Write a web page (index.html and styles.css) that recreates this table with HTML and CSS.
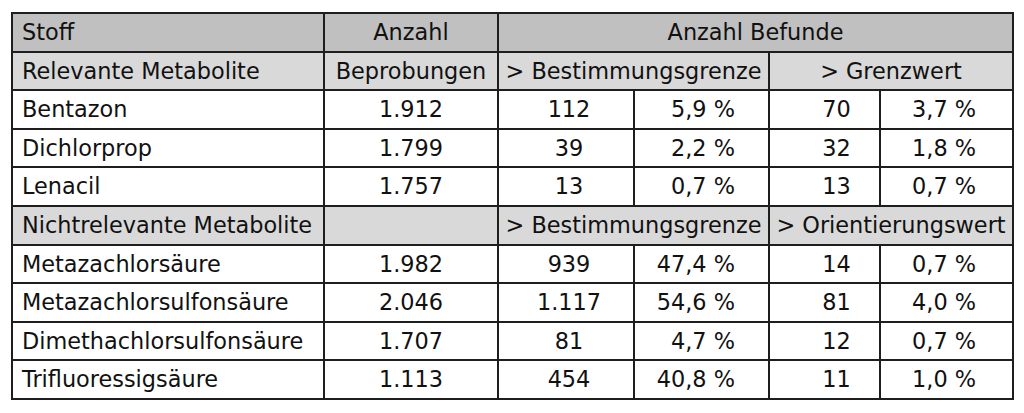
FILE: index.html
```html
<!DOCTYPE html>
<html lang="de">
<head>
<meta charset="utf-8">
<title>Metabolite</title>
<link rel="stylesheet" href="styles.css">
</head>
<body>
<div class="wrap">
<table class="data">
<colgroup>
<col class="c1"><col class="c2"><col class="c3"><col class="c4"><col class="c5"><col class="c6">
</colgroup>
<tr class="h1">
<td class="name">Stoff</td><td class="ctr">Anzahl</td><td class="ctr" colspan="4">Anzahl Befunde</td>
</tr>
<tr class="h2">
<td class="name">Relevante Metabolite</td><td class="ctr">Beprobungen</td><td class="ctr" colspan="2">&gt; Bestimmungsgrenze</td><td class="ctr" colspan="2">&gt; Grenzwert</td>
</tr>
<tr><td class="name">Bentazon</td><td class="ctr">1.912</td><td class="n3">112</td><td class="p4">5,9 %</td><td class="n5">70</td><td class="p6">3,7 %</td></tr>
<tr><td class="name">Dichlorprop</td><td class="ctr">1.799</td><td class="n3">39</td><td class="p4">2,2 %</td><td class="n5">32</td><td class="p6">1,8 %</td></tr>
<tr><td class="name">Lenacil</td><td class="ctr">1.757</td><td class="n3">13</td><td class="p4">0,7 %</td><td class="n5">13</td><td class="p6">0,7 %</td></tr>
<tr class="h2">
<td class="name">Nichtrelevante Metabolite</td><td></td><td class="ctr" colspan="2">&gt; Bestimmungsgrenze</td><td class="ctr" colspan="2">&gt; Orientierungswert</td>
</tr>
<tr><td class="name">Metazachlorsäure</td><td class="ctr">1.982</td><td class="n3">939</td><td class="p4">47,4 %</td><td class="n5">14</td><td class="p6">0,7 %</td></tr>
<tr><td class="name">Metazachlorsulfonsäure</td><td class="ctr">2.046</td><td class="n3">1.117</td><td class="p4">54,6 %</td><td class="n5">81</td><td class="p6">4,0 %</td></tr>
<tr><td class="name">Dimethachlorsulfonsäure</td><td class="ctr">1.707</td><td class="n3">81</td><td class="p4">4,7 %</td><td class="n5">12</td><td class="p6">0,7 %</td></tr>
<tr><td class="name">Trifluoressigsäure</td><td class="ctr">1.113</td><td class="n3">454</td><td class="p4">40,8 %</td><td class="n5">11</td><td class="p6">1,0 %</td></tr>
</table>
</div>
</body>
</html>
```
FILE: styles.css
```css
html, body {
  margin: 0;
  padding: 0;
  background: #ffffff;
}
.wrap {
  padding: 12px 0 0 11px;
}
.data {
  border-collapse: collapse;
  table-layout: fixed;
  width: 1001px;
  font-family: "DejaVu Sans", sans-serif;
  font-size: 22.4px;
  color: #111111;
}
.c1 { width: 312px; }
.c2 { width: 174px; }
.c3 { width: 136px; }
.c4 { width: 135px; }
.c5 { width: 111px; }
.c6 { width: 133px; }
.data tr {
  height: 38.6px;
}
.data td {
  border: 2px solid #1e1e1e;
  padding: 0;
  white-space: nowrap;
  line-height: 1;
  vertical-align: middle;
}
.h1 td { background: #c0c0c0; }
.h2 td { background: #d9d9d9; }
.name { padding-left: 9px !important; text-align: left; }
.ctr { text-align: center; }
.n3 { text-align: center; padding-left: 6px !important; }
.p4 { text-align: right; padding-right: 33px !important; }
.n5 { text-align: center; padding-left: 24px !important; }
.p6 { text-align: right; padding-right: 36px !important; }
```
